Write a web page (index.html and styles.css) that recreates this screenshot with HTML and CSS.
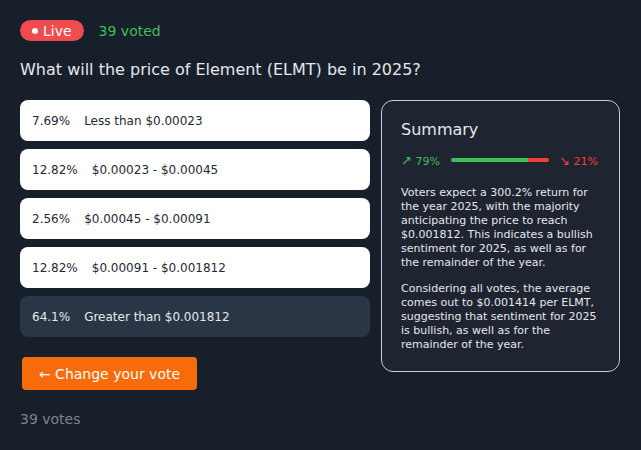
FILE: index.html
```html
<!DOCTYPE html>
<html>
<head>
<meta charset="utf-8">
<link rel="stylesheet" href="styles.css">
</head>
<body>
<div class="page">
  <div class="header">
    <span class="live"><span class="dot"></span>Live</span>
    <span class="voted">39 voted</span>
  </div>
  <h1 class="question">What will the price of Element (ELMT) be in 2025?</h1>
  <div class="main">
    <div class="left">
      <div class="options">
        <div class="option"><span class="pct">7.69%</span><span>Less than $0.00023</span></div>
        <div class="option"><span class="pct">12.82%</span><span>$0.00023 - $0.00045</span></div>
        <div class="option"><span class="pct">2.56%</span><span>$0.00045 - $0.00091</span></div>
        <div class="option"><span class="pct">12.82%</span><span>$0.00091 - $0.001812</span></div>
        <div class="option selected"><span class="pct">64.1%</span><span>Greater than $0.001812</span></div>
      </div>
      <button class="change">← Change your vote</button>
      <div class="votes">39 votes</div>
    </div>
    <div class="summary">
      <h2 class="title">Summary</h2>
      <div class="sentiment">
        <span class="up"><span class="arrow">↗</span> 79%</span>
        <div class="bar"><div class="bar-up" style="width:79%"></div><div class="bar-down"></div></div>
        <span class="down"><span class="arrow">↘</span> 21%</span>
      </div>
      <p>Voters expect a 300.2% return for the year 2025, with the majority anticipating the price to reach $0.001812. This indicates a bullish sentiment for 2025, as well as for the remainder of the year.</p>
      <p>Considering all votes, the average comes out to $0.001414 per ELMT, suggesting that sentiment for 2025 is bullish, as well as for the remainder of the year.</p>
    </div>
  </div>
</div>
</body>
</html>
```

FILE: styles.css
```css
html, body {
  margin: 0;
  padding: 0;
  background: #171f2a;
  font-family: "DejaVu Sans", sans-serif;
  color: #e5e7eb;
}
.page {
  padding: 20px;
}
.header {
  display: flex;
  align-items: center;
  gap: 14px;
  height: 21px;
}
.live {
  display: inline-flex;
  align-items: center;
  gap: 5px;
  background: #f04b4f;
  color: #fff;
  font-size: 14px;
  height: 21px;
  padding: 0 12px 0 12px;
  border-radius: 11px;
  box-sizing: border-box;
}
.dot {
  width: 6px;
  height: 6px;
  border-radius: 50%;
  background: #fff;
}
.voted {
  color: #3fbe5c;
  font-size: 14px;
  margin-left: 1px;
}
.question {
  font-size: 16px;
  font-weight: normal;
  margin: 19px 0 0 0;
  line-height: 20px;
  color: #e5e7eb;
}
.main {
  display: flex;
  gap: 11px;
  margin-top: 20px;
  align-items: flex-start;
}
.left {
  width: 350px;
}
.options {
  display: flex;
  flex-direction: column;
  gap: 8px;
}
.option {
  height: 41px;
  background: #fff;
  border-radius: 8px;
  display: flex;
  align-items: center;
  padding: 0 12px;
  font-size: 12px;
  color: #1f2937;
  gap: 14px;
}
.option.selected {
  background: #2a3645;
  color: #e5e7eb;
}
.change {
  margin: 20px 0 0 2px;
  height: 33px;
  width: 175px;
  background: #f76b0b;
  color: #fff;
  border: none;
  border-radius: 4px;
  font-family: "DejaVu Sans", sans-serif;
  font-size: 14px;
  padding: 0;
}
.votes {
  margin-top: 21px;
  font-size: 14px;
  color: #7b8490;
}
.summary {
  width: 239px;
  box-sizing: border-box;
  height: 272px;
  border: 1px solid #c9ced6;
  border-radius: 12px;
  background: #1f2530;
  padding: 19px 19px;
}
.title {
  font-size: 16px;
  font-weight: normal;
  margin: 0;
  line-height: 20px;
  color: #e5e7eb;
}
.sentiment {
  display: flex;
  align-items: center;
  margin-top: 11px;
  font-size: 11px;
  height: 18px;
}
.arrow {
  font-size: 13px;
}
.up {
  color: #3fbe5c;
  width: 50px;
}
.down {
  color: #ef3e36;
  margin-left: 10px;
}
.bar {
  display: flex;
  width: 98px;
  height: 4px;
  border-radius: 2px;
  overflow: hidden;
}
.bar-up {
  background: #3fbe5c;
}
.bar-down {
  flex: 1;
  background: #ef3e36;
}
.summary p {
  font-size: 11px;
  line-height: 14px;
  margin: 17px 0 0 0;
  color: #e5e7eb;
}
.summary p + p {
  margin-top: 12px;
}
```
